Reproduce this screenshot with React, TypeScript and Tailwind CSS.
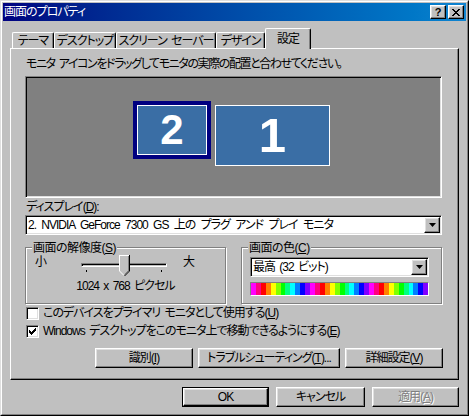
import React from "react";

const raised =
  "border border-t-white border-l-white border-r-black border-b-black shadow-[inset_-1px_-1px_0_#808080,inset_1px_1px_0_#dfdfdf]";
const sunken =
  "border border-t-[#808080] border-l-[#808080] border-r-white border-b-white shadow-[inset_1px_1px_0_#000,inset_-1px_-1px_0_#dfdfdf]";
const etched =
  "border border-[#808080] shadow-[inset_1px_1px_0_#fff,1px_1px_0_#fff]";
const tab =
  "h-[16px] whitespace-nowrap border-l border-t border-t-white border-l-white border-r border-r-black rounded-tl-[2px] rounded-tr-[2px] shadow-[inset_-1px_0_0_#808080] flex items-start justify-center pt-[1px]";

function Arrow() {
  return (
    <div className={`w-[16px] h-[16px] shrink-0 bg-[#c0c0c0] flex items-center justify-center ${raised}`}>
      <svg width="7" height="4" viewBox="0 0 7 4">
        <path d="M0 0 H7 L3.5 4 Z" fill="#000" />
      </svg>
    </div>
  );
}

function Btn({ children, w, disabled }: { children: React.ReactNode; w: string; disabled?: boolean }) {
  return (
    <div className={`${w} h-[20px] whitespace-nowrap bg-[#c0c0c0] flex items-center justify-center ${raised} ${disabled ? "text-[#808080] [text-shadow:1px_1px_0_#fff]" : ""}`}>
      {children}
    </div>
  );
}

function Check({ checked }: { checked?: boolean }) {
  return (
    <div className={`w-[13px] h-[13px] bg-white shrink-0 flex items-center justify-center ${sunken}`}>
      {checked && (
        <svg width="7" height="7" viewBox="0 0 7 7" shapeRendering="crispEdges">
          <path d="M0 2h1v3H0zM1 3h1v3H1zM2 4h1v3H2zM3 3h1v3H3zM4 2h1v3H4zM5 1h1v3H5zM6 0h1v3H6z" fill="#000" />
        </svg>
      )}
    </div>
  );
}

const hues = Array.from({ length: 36 }, (_, i) => (300 + i * 30) % 360);

export default function App() {
  return (
    <div className="w-[469px] h-[416px] bg-[#c0c0c0] border border-t-[#dfdfdf] border-l-[#dfdfdf] border-r-black border-b-black text-[12px] leading-[14px] tracking-[-1px] [word-spacing:2px] text-black font-['Liberation_Sans','Noto_Sans_CJK_JP',sans-serif] [font-feature-settings:'palt']">
      <div className="w-full h-full border border-t-white border-l-white border-r-[#808080] border-b-[#808080] p-[1px] flex flex-col">
        {/* title bar */}
        <div className="h-[18px] bg-gradient-to-r from-[#000080] to-[#1084d0] flex items-center pl-[1px] pr-[2px]">
          <span className="text-white flex-1 whitespace-nowrap">画面のプロパティ</span>
          <div className={`w-[16px] h-[14px] bg-[#c0c0c0] flex items-center justify-center ${raised}`}>
            <span className="font-bold text-[11px] leading-[11px] tracking-normal">?</span>
          </div>
          <div className={`ml-[2px] w-[16px] h-[14px] bg-[#c0c0c0] flex items-center justify-center ${raised}`}>
            <svg width="8" height="7" viewBox="0 0 8 7" shapeRendering="crispEdges">
              <path d="M0 0h2v1H0zM6 0h2v1H6zM1 1h2v1H1zM5 1h2v1H5zM2 2h4v1H2zM3 3h2v1H3zM2 4h4v1H2zM1 5h2v1H1zM5 5h2v1H5zM0 6h2v1H0zM6 6h2v1H6z" fill="#000" />
            </svg>
          </div>
        </div>

        {/* tabs */}
        <div className="mt-[7px] h-[20px] pl-[9px] flex items-end">
          <div className={`w-[42px] ${tab}`}>テーマ</div>
          <div className={`w-[62px] ${tab}`}>デスクトップ</div>
          <div className={`w-[100px] ${tab}`}>スクリーン セーバー</div>
          <div className={`w-[49px] ${tab}`}>デザイン</div>
          <div className="relative z-10 -mb-[1px] w-[46px] h-[21px] bg-[#c0c0c0] border-l border-t border-t-white border-l-white border-r border-r-black rounded-tl-[2px] rounded-tr-[2px] shadow-[inset_-1px_0_0_#808080] flex items-start justify-center pt-[3px]">設定</div>
        </div>

        {/* panel */}
        <div className="ml-[7px] w-[449px] h-[332px] border border-t-white border-l-white border-r-black border-b-black shadow-[inset_-1px_-1px_0_#808080] pl-[14px] pr-[15px] flex flex-col">
          <div className="mt-[8px] pl-[1px] whitespace-nowrap tracking-[-1.4px]">モニタ アイコンをドラッグしてモニタの実際の配置と合わせてください。</div>
          <div className={`relative mt-[5px] w-[417px] h-[122px] bg-[#808080] ${sunken}`}>
            <div className="absolute left-[107px] top-[24px] w-[78px] h-[58px] border-4 border-[#000080]">
              <div className="w-full h-full border border-white bg-[#3a6ea5] flex items-center justify-center text-white font-bold text-[42px] leading-[42px] tracking-normal font-['Liberation_Sans',sans-serif]">2</div>
            </div>
            <div className="absolute left-[189px] top-[28px] w-[115px] h-[61px] border border-white bg-[#3a6ea5] flex items-center justify-center text-white font-bold text-[49px] leading-[49px] tracking-normal font-['Liberation_Sans',sans-serif]">1</div>
          </div>
          <div className="mt-[2px] pl-[1px]">ディスプレイ(<u>D</u>):</div>
          <div className={`mt-[1px] w-[417px] h-[20px] bg-white flex items-center pl-[2px] pr-[1px] ${sunken}`}>
            <span className="flex-1 whitespace-nowrap tracking-[-1px] [word-spacing:3px]">2. NVIDIA GeForce 7300 GS 上の プラグ アンド プレイ モニタ</span>
            <Arrow />
          </div>

          <div className="mt-[12px] flex gap-[15px]">
            {/* resolution */}
            <div className={`relative w-[201px] h-[57px] ${etched}`}>
              <div className="absolute left-[6px] -top-[7px] px-[1px] bg-[#c0c0c0] whitespace-nowrap tracking-[-0.5px]">画面の解像度(<u>S</u>)</div>
              <div className="flex items-start pt-[7px] pl-[9px]">
                <span className="w-[13px]">小</span>
                <div className="relative ml-[33px] w-[86px] h-[22px]">
                  <div className="absolute left-0 top-[8px] w-[86px] h-[4px] border border-t-[#808080] border-l-[#808080] border-r-white border-b-white shadow-[inset_1px_1px_0_#000]" />
                  <div className="absolute left-[5px] top-[15px] w-[1px] h-[2px] bg-black" />
                  <div className="absolute left-[43px] top-[15px] w-[1px] h-[2px] bg-black" />
                  <div className="absolute left-[80px] top-[15px] w-[1px] h-[2px] bg-black" />
                  <svg className="absolute left-[38px] top-0" width="11" height="21" viewBox="0 0 11 21" shapeRendering="crispEdges">
                    <path d="M0 0H11V16L5.5 21L0 16Z" fill="#c0c0c0" />
                    <path d="M0.5 16V0.5H10" stroke="#fff" fill="none" />
                    <path d="M0.5 16L5 20.5" stroke="#fff" fill="none" shapeRendering="auto" />
                    <path d="M10.5 0V16" stroke="#000" fill="none" />
                    <path d="M10.5 16L5.5 21" stroke="#000" fill="none" shapeRendering="auto" />
                    <path d="M9.5 1V15.5" stroke="#808080" fill="none" />
                    <path d="M9.5 15.5L5.5 19.5" stroke="#808080" fill="none" shapeRendering="auto" />
                  </svg>
                </div>
                <span className="ml-[16px]">大</span>
              </div>
              <div className="mt-[2px] text-center whitespace-nowrap">1024 x 768 ピクセル</div>
            </div>
            {/* color */}
            <div className={`relative w-[201px] h-[57px] ${etched}`}>
              <div className="absolute left-[6px] -top-[7px] px-[1px] bg-[#c0c0c0] whitespace-nowrap tracking-[-0.5px]">画面の色(<u>C</u>)</div>
              <div className="pl-[8px] pt-[9px]">
                <div className={`w-[179px] h-[20px] bg-white flex items-center pl-[2px] pr-[1px] ${sunken}`}>
                  <span className="flex-1 whitespace-nowrap">最高 (32 ビット)</span>
                  <Arrow />
                </div>
                <div className="mt-[5px] w-[179px] h-[14px] border border-t-[#808080] border-l-[#808080] border-r-white border-b-white flex">
                  {hues.map((h, i) => (
                    <div key={i} className="flex-1" style={{ background: `hsl(${h},100%,50%)` }} />
                  ))}
                </div>
              </div>
            </div>
          </div>

          <div className="mt-[2px] pl-[1px] flex items-center gap-[4px]">
            <Check />
            <span className="whitespace-nowrap">このデバイスをプライマリ モニタとして使用する(<u>U</u>)</span>
          </div>
          <div className="mt-[4px] pl-[1px] flex items-center gap-[4px]">
            <Check checked />
            <span className="whitespace-nowrap">Windows デスクトップをこのモニタ上で移動できるようにする(<u>E</u>)</span>
          </div>

          <div className="mt-[10px] flex justify-end gap-[5px]">
            <Btn w="w-[98px]">識別(<u>I</u>)</Btn>
            <Btn w="w-[142px]">トラブルシューティング(<u>T</u>)...</Btn>
            <Btn w="w-[98px]">詳細設定(<u>V</u>)</Btn>
          </div>
        </div>

        {/* bottom buttons */}
        <div className="mt-[7px] pr-[7px] flex justify-end gap-[7px]">
          <div className="w-[87px] h-[20px] border border-black">
            <div className={`w-full h-full bg-[#c0c0c0] flex items-center justify-center ${raised}`}>OK</div>
          </div>
          <Btn w="w-[89px]">キャンセル</Btn>
          <Btn w="w-[87px]" disabled>適用(<u>A</u>)</Btn>
        </div>
      </div>
    </div>
  );
}
